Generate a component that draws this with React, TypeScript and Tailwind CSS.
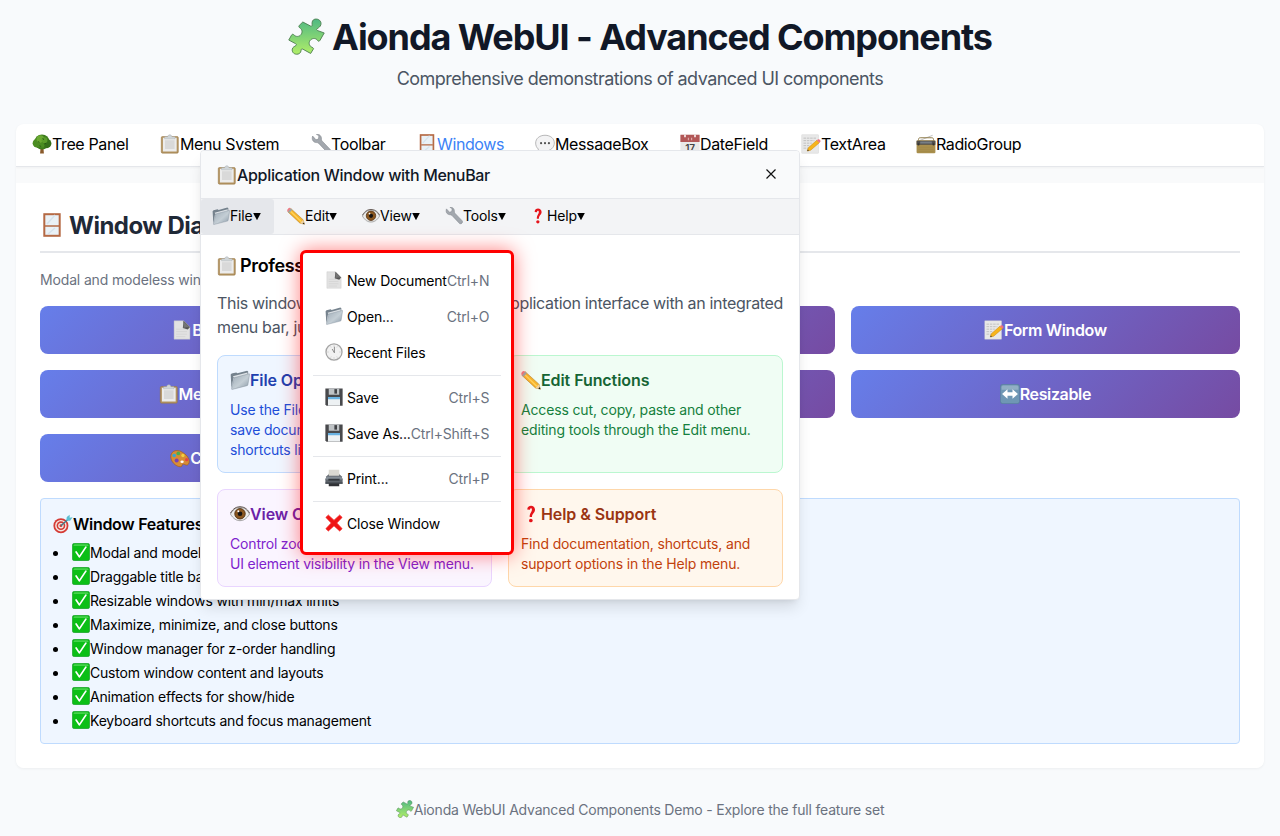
import type { ReactNode } from 'react';

type IconProps = { name: string; className?: string };

const glyphs: Record<string, ReactNode> = {
  puzzle: (
    <path d="M9.600 2.600 14.600 5.200C15.800 5.700 15.700 4.700 15.600 3.200 15.700 1.300 17 .5 18.600.7c2 .2 3.200 1.900 2.700 3.700-.4 1.300-1.300 1.800-2.300 2.500-.8.6-.4 1 .3 1.300l4.200 1.500-2.700 4.700c-.6 1-1.200.9-1.700 0-.9-1.300-3-1.500-4.300-.3-1.500 1.300-1.400 3.400.1 4.500 1 .8 2 .6 1.500 1.600L14.700 23 9.800 20.300c-1-.5-1.200-.2-1.300.7-.2 1.700-1.400 2.600-3 2.500-1.900-.1-3.100-1.700-2.700-3.400.3-1.300 1.500-1.600 2.300-2.200.6-.5.5-.9-.3-1.300L.5 14.300l1.800-3.200c.5-.8 1-.7 1.600-.1 1.300 1.400 3.400 1.200 4.500-.2 1.200-1.500.8-3.500-.7-4.400-.8-.5-.8-.9-.4-1.600z" fill="url(#pz)" stroke="#4d7f50" strokeWidth=".6" strokeLinejoin="round" />
  ),
  tree: (
    <>
      <path d="M10.500 14h3l.8 9.500H9.700z" fill="#8a5a2b" />
      <circle cx="12" cy="9.500" r="9" fill="#3f7d1e" />
      <circle cx="6" cy="11" r="5.200" fill="#4b8d22" />
      <circle cx="17.800" cy="11.500" r="5.500" fill="#35701a" />
      <circle cx="10" cy="6" r="4.500" fill="#6aa932" />
      <circle cx="15" cy="7.500" r="3.500" fill="#5a9c2a" />
      <circle cx="12" cy="13.500" r="3" fill="#4b8d22" />
      <path d="M7 9l2 1M13 5l1 2M15 12l2-1M9 14l2 1" stroke="#245512" strokeWidth="1" />
    </>
  ),
  clipboard: (
    <>
      <rect x="1.500" y="3" width="20.500" height="20" rx="1.500" fill="#b39462" stroke="#94733f" strokeWidth=".6" />
      <rect x="3.500" y="4.500" width="16.500" height="16.500" fill="#ececec" />
      <path d="M6 7.500h11.500v10.500H6z" fill="#d9d9d9" />
      <path d="M5.500 3.200h3.700c.3-3 4.800-3 5.100 0H18v2.600H5.500z" fill="#cfd5d8" stroke="#a5abb0" strokeWidth=".5" />
    </>
  ),
  wrench: (
    <path d="M2 2.500 6 7l3-1 .5-3.800L6.500.4C9.500-.3 13 2 12.500 6.500c0 1 .5 1.600 1.300 2.400L23 18.500c1.300 1.500-.8 4.800-3.300 3.800L9.300 11.300c-.8-.8-1.400-1-2.600-1C2.500 10.300.5 6.500 2 2.500z" fill="#a3a8ae" stroke="#7d838a" strokeWidth=".7" />
  ),
  window: (
    <>
      <rect x="4.300" y="1.200" width="15.400" height="21.600" fill="#eaf1f6" stroke="#b56a45" strokeWidth="2" />
      <path d="M5 13h14" stroke="#b56a45" strokeWidth="1.500" />
      <path d="M7 11l8-9M8 21l7-6" stroke="#d5e3ed" strokeWidth="1.500" />
    </>
  ),
  speech: (
    <>
      <path d="M12 1.500c6.500 0 11.200 3.900 11.200 9.300S18.500 20.500 12 20.500c-1.400 0-3-.2-4.300-.7C6.500 21.500 4 22.800 2 22.500c1.500-1 2-2.500 2-4.500-2-1.600-3.200-4-3.200-7.200C.8 5.400 5.500 1.500 12 1.500z" fill="#f3f3f4" stroke="#a9a9ab" strokeWidth="1" />
      <g fill="#505050"><circle cx="7.300" cy="11" r="1.300" /><circle cx="12" cy="11" r="1.300" /><circle cx="16.700" cy="11" r="1.300" /></g>
    </>
  ),
  calendar: (
    <>
      <rect x=".5" y="1" width="23" height="22" rx="1" fill="#e9e9e8" />
      <path d="M.5 1h23v8.500H.5z" fill="#b25757" />
      <path d="M6 1v3M18 1v3" stroke="#fff" strokeWidth="1.800" />
      <path d="M10 4.500v3M14 4.500v3" stroke="#efcaca" strokeWidth="1" />
      <text x="12" y="21" textAnchor="middle" fontSize="12" fontWeight="600" fill="#444" fontFamily="Inter, sans-serif">17</text>
    </>
  ),
  memo: (
    <>
      <rect x="1" y="1" width="20" height="22" fill="#e8e8e8" stroke="#cfcfcf" strokeWidth=".5" />
      <path d="M3 5h15M3 8h13M3 11h10M3 14h8M3 17h6" stroke="#b9b9b9" strokeWidth="1" strokeDasharray="3 1" />
      <path d="m7.500 20.500 1.300-4L19 7.500l3 3-10.500 9z" fill="#f7b51b" stroke="#c98408" strokeWidth=".6" />
      <path d="m19 7.500 1.500-1.200c1.500-.5 3.500 1.400 2.800 2.900L22 10.500z" fill="#ee7480" />
      <path d="m7.500 20.500.6-1.900 1.600 1.200z" fill="#333" />
    </>
  ),
  radio: (
    <>
      <path d="M4 8 20 1.500" stroke="#b5b5b5" strokeWidth="1" />
      <path d="M3 8V6.500C3 5 4 4.500 5 4.500h14c1 0 2 .5 2 2V8" fill="none" stroke="#8f7c4b" strokeWidth="1.200" />
      <rect x=".7" y="7.500" width="22.600" height="15.500" rx="1.500" fill="#a98f4d" />
      <path d="M.7 8h22.600v5H.7z" fill="#504e4b" />
      <rect x="5" y="9" width="14" height="2.500" fill="#777e85" />
      <circle cx="3" cy="12.500" r="1.300" fill="#333" /><circle cx="21" cy="12.500" r="1.300" fill="#333" />
      <path d="M3 16h18M3 18.500h18M3 21h18" stroke="#9f8645" strokeWidth=".6" />
    </>
  ),
  folder: (
    <>
      <path d="M.8 5.500 2 4.300 7.500 3l1.300 1L20.500.8l1.300 1V5L4 10 1.800 22z" fill="#75828d" />
      <path d="M3.500 7.500 21 3v3L5 10z" fill="#dfe4e8" />
      <path d="M4.800 9.300 22.900 4.500c.5-.1.700.2.600.7l-2 12.500c-.1.600-.4.900-1 1.100L2.700 23.300c-.6.100-.9-.2-.8-.8z" fill="url(#fd)" stroke="#7c8995" strokeWidth=".5" />
    </>
  ),
  pencil: (
    <>
      <path d="M5 2 21.500 17l1.800 6-6-1.500L1.200 6.500z" fill="#f6b52d" stroke="#a8721b" strokeWidth=".6" />
      <path d="m4 5 15 14.500" stroke="#ffd35a" strokeWidth="1.800" />
      <path d="M5 2 1.200 6.500C-.4 5 .4 3.300 1.400 2.200S3.800.5 5 2z" fill="#ed7b84" />
      <path d="M7 3.800 3 8 1.200 6.500 5 2z" fill="#9ca5aa" />
      <path d="m21.500 17 1.800 6-6-1.500z" fill="#efd2a0" /><path d="m22.500 20.500.8 2.500-2.600-.6z" fill="#222" />
    </>
  ),
  eye: (
    <>
      <path d="M.5 12C5 5 9 4 12 4s8 1.500 11.500 8C20 18 16 20 12 20S4 18 .5 12z" fill="#ececea" stroke="#888" strokeWidth=".9" />
      <circle cx="12" cy="11.700" r="6.300" fill="#8a571f" stroke="#4d2c12" strokeWidth="1" />
      <circle cx="12" cy="11.700" r="2.800" fill="#161311" /><circle cx="10" cy="8.800" r="1.200" fill="#fff" />
      <path d="M.5 11C4 5 8 3.300 12 3.300S20.500 5 23.500 11" fill="none" stroke="#625751" strokeWidth="1.200" />
    </>
  ),
  question: (
    <>
      <path d="M7.500 6.500C7.500.5 16.800.5 16.800 6.800c0 4-3.600 4.200-3.600 8.700h-2.800c0-5 2.700-5.700 2.700-8.700 0-2.300-2.300-2.200-2.400.2z" fill="#e5141b" />
      <circle cx="11.800" cy="19.800" r="2.200" fill="#e5141b" />
    </>
  ),
  page: (
    <>
      <path d="M2.500 1H14l7.500 7.500V23h-19z" fill="#e2e2e2" stroke="#c5c5c5" strokeWidth=".5" />
      <path d="M5 11h13M5 14h13M5 17h13M5 20h11" stroke="#d3d3d3" strokeWidth="1" />
      <path d="M14 1 21.500 8.500 19 11.500l-6-2z" fill="#555" /><path d="m13 1 8.500 8c-3-.6-6-.5-8 1 .9-3 .7-6-.5-9z" fill="#747474" />
    </>
  ),
  clock: (
    <>
      <circle cx="12" cy="12" r="10.700" fill="#f1f1f1" stroke="#a4a4a4" strokeWidth="1.700" />
      <path d="M12 3v2M12 19v2M3 12h2M19 12h2M7.500 4.500l.8 1.500M16.500 4.500 15.700 6M7.500 19.500l.8-1.500M16.500 19.500l-.8-1.500" stroke="#b5b5b5" strokeWidth=".7" />
      <path d="M12.500 13V5M12.500 13 9.500 8" stroke="#6b6b6b" strokeWidth="1" />
    </>
  ),
  floppy: (
    <>
      <path d="M.5.500h23v23H2l-1.500-1.500z" fill="#48494c" />
      <path d="M5 .5h14v8.500H5z" fill="#bfc3c6" /><path d="M12.500 1.500h3.500v6h-3.500z" fill="#404246" />
      <path d="M4 12h16v11.500H4z" fill="#edf1f3" /><path d="M4 12h16v3H4z" fill="#69b2e2" />
    </>
  ),
  printer: (
    <>
      <path d="M5 1h14v9H5z" fill="#dad9d2" />
      <path d="M2 9.500 5 7h14l3 2.500 1.500 4V20H.5v-6.500z" fill="#5d636a" />
      <path d="M2 10h20l1.500 4H.5z" fill="#858e96" />
      <path d="M5 5h14v4H5z" fill="#dad9d2" />
      <path d="M4.500 13h15v2.500h-15z" fill="#33383d" /><path d="M5 19h14v4H5z" fill="#303236" />
      <path d="M.5 18.500h23" stroke="#3b4148" />
    </>
  ),
  cross: (
    <path d="m4.500 1.500 7.500 7 7.500-7 3.200 3L15.500 12l7.200 7.500-3.200 3-7.500-7-7.500 7-3.200-3L8.500 12 1.300 4.500z" fill="#ef1515" stroke="#ef1515" strokeWidth="1.200" strokeLinejoin="round" />
  ),
  target: (
    <>
      <circle cx="9.500" cy="14" r="9" fill="#d53b35" /><circle cx="9.500" cy="14" r="6.900" fill="#f3e9e5" />
      <circle cx="9.500" cy="14" r="5.200" fill="#d53b35" /><circle cx="9.500" cy="14" r="3.300" fill="#f3e9e5" /><circle cx="9.500" cy="14" r="1.700" fill="#d53b35" />
      <path d="m9.500 14 10-9" stroke="#397d8b" strokeWidth="1.500" /><path d="m16 8 .5-4.500L20 1v3.500l3.500-.5-3 4z" fill="#5cbfd1" />
    </>
  ),
  check: (
    <>
      <rect x=".4" y=".4" width="23.200" height="23.200" rx="3" fill="#0bbf16" stroke="#1a962c" strokeWidth=".8" />
      <path d="M2 4c0-1.500 1-2.200 2.500-2.200h15c1.500 0 2.500.7 2.500 2.200" fill="#45d24b" />
      <path d="m5.500 12 4.300 6.500L18.500 5.500" fill="none" stroke="#fff" strokeWidth="2.300" strokeLinecap="round" strokeLinejoin="round" />
    </>
  ),
  palette: (
    <>
      <path d="M1 9C2 3 9 1 15.500 5.500 22 9.500 25 16 22 19.500c-2 2.500-4.500-.5-6.500 0-2 .6 0 3-3 3C7 22.500 0 16 1 9z" fill="#d78c35" stroke="#9c5b20" strokeWidth=".8" />
      <circle cx="5" cy="9" r="2.200" fill="#33a6d5" /><circle cx="10" cy="6.500" r="2.200" fill="#4cae4b" /><circle cx="15.500" cy="9" r="2" fill="#f1cf3e" />
      <circle cx="20" cy="14" r="2" fill="#e64444" /><circle cx="8" cy="15" r="2.400" fill="#7741b7" /><ellipse cx="14.500" cy="16.500" rx="2" ry="1.500" fill="#fff" />
    </>
  ),
  resize: (
    <>
      <rect x=".4" y=".4" width="23.200" height="23.200" rx="3" fill="#6f97b4" stroke="#557b98" strokeWidth=".8" />
      <path d="M2 4c0-1.500 1-2.200 2.500-2.200h15C21 1.800 22 2.500 22 4v3H2z" fill="#91afc4" />
      <path d="M2.500 12 9 6.200v3.600h6V6.200l6.500 5.800-6.500 5.800v-3.600H9v3.600z" fill="#fff" />
    </>
  ),
};

function Icon({ name, className = 'size-5' }: IconProps) {
  return (
    <svg viewBox="0 0 24 24" aria-hidden="true" className={`shrink-0 ${className}`}>
      {glyphs[name]}
    </svg>
  );
}

const tabs = [
  { icon: 'tree', label: 'Tree Panel', w: 'w-[128px]' },
  { icon: 'clipboard', label: 'Menu System', w: 'w-[151px]' },
  { icon: 'wrench', label: 'Toolbar', w: 'w-[106px]' },
  { icon: 'window', label: 'Windows', w: 'w-[118px]' },
  { icon: 'speech', label: 'MessageBox', w: 'w-[145px]' },
  { icon: 'calendar', label: 'DateField', w: 'w-[121px]' },
  { icon: 'memo', label: 'TextArea', w: 'w-[115px]' },
  { icon: 'radio', label: 'RadioGroup', w: 'w-[140px]' },
];

const demos = [
  { icon: 'page', label: 'Basic Window' },
  { icon: 'speech', label: 'Modal Dialog' },
  { icon: 'memo', label: 'Form Window' },
  { icon: 'clipboard', label: 'MenuBar Window' },
  { icon: 'wrench', label: 'Toolbar Window' },
  { icon: 'resize', label: 'Resizable' },
  { icon: 'palette', label: 'Custom Styled' },
];

const features = [
  'Modal and modeless windows',
  'Draggable title bar',
  'Resizable windows with min/max limits',
  'Maximize, minimize, and close buttons',
  'Window manager for z-order handling',
  'Custom window content and layouts',
  'Animation effects for show/hide',
  'Keyboard shortcuts and focus management',
];

const menus = [
  { icon: 'folder', label: 'File', w: 'w-[73px] bg-[#e5e7eb] pl-[11px]' },
  { icon: 'pencil', label: 'Edit', w: 'w-[75px] pl-[13px]' },
  { icon: 'eye', label: 'View', w: 'w-[83px] pl-[13px]' },
  { icon: 'wrench', label: 'Tools', w: 'w-[85px] pl-[13px]' },
  { icon: 'question', label: 'Help', w: 'w-[80px] pl-3' },
];

const cards = [
  { icon: 'folder', title: 'File Operations', box: 'bg-[#eff6ff] border-[#bfdbfe]', head: 'text-[#1e40af]', body: 'text-[#1d4ed8] tracking-[-0.17px]', lines: ['Use the File menu to open and', 'save documents. Try keyboard', 'shortcuts like Ctrl+N.'] },
  { icon: 'pencil', title: 'Edit Functions', box: 'bg-[#f0fdf4] border-[#bbf7d0]', head: 'text-[#166534]', body: 'text-[#15803d] tracking-[-0.15px]', lines: ['Access cut, copy, paste and other', 'editing tools through the Edit menu.'] },
  { icon: 'eye', title: 'View Controls', box: 'bg-[#faf5ff] border-[#e9d5ff]', head: 'text-[#6b21a8]', body: 'text-[#7e22ce] tracking-[-0.17px]', lines: ['Control zoom, layout and', 'UI element visibility in the View menu.'] },
  { icon: 'question', title: 'Help & Support', box: 'bg-[#fff7ed] border-[#fed7aa]', head: 'text-[#9a3412]', body: 'text-[#c2410c] tracking-[-0.15px]', lines: ['Find documentation, shortcuts, and', 'support options in the Help menu.'] },
];

const fileMenu = [
  [
    { icon: 'page', label: 'New Document', keys: 'Ctrl+N' },
    { icon: 'folder', label: 'Open...', keys: 'Ctrl+O' },
    { icon: 'clock', label: 'Recent Files', keys: '' },
  ],
  [
    { icon: 'floppy', label: 'Save', keys: 'Ctrl+S' },
    { icon: 'floppy', label: 'Save As...', keys: 'Ctrl+Shift+S' },
  ],
  [{ icon: 'printer', label: 'Print...', keys: 'Ctrl+P' }],
  [{ icon: 'cross', label: 'Close Window', keys: '' }],
];

function AppWindow() {
  return (
    <section className="absolute left-[200px] top-[150px] flex h-[450px] w-[600px] flex-col overflow-hidden rounded-[4px] border border-[#e5e7eb] bg-white shadow-[0_10px_15px_-3px_rgba(0,0,0,0.12),0_4px_6px_-4px_rgba(0,0,0,0.1)]">
      <header className="flex h-12 shrink-0 items-center justify-between border-b border-[#e5e7eb] bg-[#f9fafb] pl-4 pr-[22px] text-[#111827]">
        <div className="flex items-center text-base font-medium tracking-[-0.32px]"><Icon name="clipboard" />Application Window with MenuBar</div>
        <svg viewBox="0 0 12 12" className="mb-px size-3"><path d="m1.500 1.500 9 9m0-9-9 9" stroke="#111" strokeWidth="1.200" /></svg>
      </header>
      <nav className="flex h-9 shrink-0 border-b border-[#e5e7eb] bg-[#f3f4f6] text-sm tracking-[-0.15px]">
        {menus.map((m) => (
          <div key={m.label} className={`flex items-center whitespace-nowrap rounded-[3px] pb-0.5 ${m.w}`}>
            <Icon name={m.icon} className="size-[18px]" />{m.label}
            <svg viewBox="0 0 9 9" className="mt-0.5 h-[9px] w-2"><path d="M.2.500h8.600L4.500 8.800z" /></svg>
          </div>
        ))}
      </nav>
      <div className="px-4 pt-[17px]">
        <h3 className="flex h-7 items-center text-lg font-semibold tracking-[-0.35px]"><Icon name="clipboard" className="mr-[3px] size-5" />Professional Window Interface</h3>
        <p className="mt-[11px] whitespace-nowrap text-base tracking-[-0.33px] text-[#4b5563]">
          <span className="flex justify-between"><span>This window demonstrates a full</span><span>application interface with an integrated</span></span>
          menu bar, just like a desktop app.
        </p>
        <div className="mt-4 grid grid-cols-2 gap-4">
          {cards.map((c) => (
            <article key={c.title} className={`rounded-lg border p-3 ${c.box}`}>
              <h4 className={`mb-2 flex items-center text-base font-semibold tracking-[-0.08px] ${c.head}`}><Icon name={c.icon} />{c.title}</h4>
              <p className={`whitespace-nowrap text-sm ${c.body}`}>
                {c.lines.map((l) => <span key={l} className="block">{l}</span>)}
              </p>
            </article>
          ))}
        </div>
      </div>
    </section>
  );
}

function FileMenu() {
  return (
    <div className="absolute left-[300px] top-[250px] w-[214.3px] rounded-[6px] border-[3px] border-[#ff0000] bg-white p-2.5 text-sm tracking-[-0.18px] shadow-[0_0_20px_rgba(255,0,0,0.5)]">
      {fileMenu.map((group, i) => (
        <div key={i} className={i > 0 ? 'mt-1 border-t border-[#e5e7eb] pt-1' : ''}>
          {group.map((it) => (
            <div key={it.label} className="flex h-9 items-center whitespace-nowrap px-3">
              <Icon name={it.icon} className="mb-0.5 mr-1 size-[18px]" />
              <span>{it.label}</span>
              <span className="ml-auto text-[#6b7280]">{it.keys}</span>
            </div>
          ))}
        </div>
      ))}
    </div>
  );
}

export default function App() {
  return (
    <div className="relative h-[836px] w-[1280px] overflow-hidden bg-[#f8fafc] px-4 pt-4 font-[Inter,sans-serif] text-black">
      <svg className="absolute size-0">
        <defs>
          <linearGradient id="pz" x1="0" y1="0" x2="0" y2="1"><stop stopColor="#4fb883" /><stop offset="1" stopColor="#b1ee68" /></linearGradient>
          <linearGradient id="fd" x1="0" y1="0" x2="1" y2="1"><stop stopColor="#9eabb6" /><stop offset=".55" stopColor="#c4ced5" /><stop offset="1" stopColor="#8797a5" /></linearGradient>
        </defs>
      </svg>
      <header className="h-[108px]">
        <h1 className="flex h-[41px] items-center justify-center text-4xl font-bold tracking-[-1.08px] text-[#111827]"><Icon name="puzzle" className="mb-px mr-[7px] size-[37px]" />Aionda WebUI - Advanced Components</h1>
        <p className="mt-1 text-center text-lg leading-[35px] tracking-[-0.55px] text-[#4b5563]">Comprehensive demonstrations of advanced UI components</p>
      </header>
      <main className="h-[644px] overflow-hidden rounded-lg bg-[#f9fafb] shadow-[0_1px_3px_rgba(0,0,0,0.05)]">
        <nav className="flex h-[43px] border-b border-[#e5e7eb] bg-white pl-4 pb-0.5 text-base tracking-[-0.38px] shadow-[0_1px_2px_rgba(0,0,0,0.04)]">
          {tabs.map((t) => (
            <div key={t.label} className={`flex items-center whitespace-nowrap ${t.w} ${t.label === 'Windows' ? 'text-[#3b82f6]' : ''}`}><Icon name={t.icon} className={t.icon === 'window' ? 'size-5' : 'size-5'} />{t.label}</div>
          ))}
        </nav>
        <section className="mt-4 h-[585px] bg-white px-6 pt-[23px]">
          <h2 className="flex h-[47px] items-center border-b-2 border-[#e5e7eb] pb-[5px] text-2xl font-bold tracking-[-0.5px] text-[#1f2937]"><Icon name="window" className="mb-0.5 mr-[5px] size-6" />Window Dialogs</h2>
          <p className="mt-[17px] text-sm tracking-[-0.15px] text-[#6b7280]">Modal and modeless windows with advanced controls</p>
          <div className="mt-4 grid grid-cols-3 gap-4">
            {demos.map((d) => (
              <button key={d.label} className="flex h-12 items-center justify-center rounded-lg bg-[linear-gradient(135deg,#667eea_0%,#764ba2_100%)] text-base font-semibold tracking-[-0.36px] text-white"><Icon name={d.icon} />{d.label}</button>
            ))}
          </div>
          <div className="mt-4 h-[246px] rounded-[4px] border border-[#bfdbfe] bg-[#eff6ff] px-3 pt-3">
            <h3 className="mb-[5px] flex h-[25px] items-center text-base font-semibold tracking-[-0.3px]"><Icon name="target" />Window Features:</h3>
            <ul className="text-sm tracking-[-0.2px]">
              {features.map((f) => (
                <li key={f} className="flex h-6 items-center"><span className="mr-[14px] size-[5px] rounded-full bg-black" /><Icon name="check" className="mb-0.5 size-[18px]" />{f}</li>
              ))}
            </ul>
          </div>
        </section>
      </main>
      <footer className="flex h-[84px] items-center justify-center text-sm tracking-[-0.2px] text-[#6b7280]"><Icon name="puzzle" className="mb-0.5 size-[18px]" />Aionda WebUI Advanced Components Demo - Explore the full feature set</footer>
      <AppWindow />
      <FileMenu />
    </div>
  );
}
